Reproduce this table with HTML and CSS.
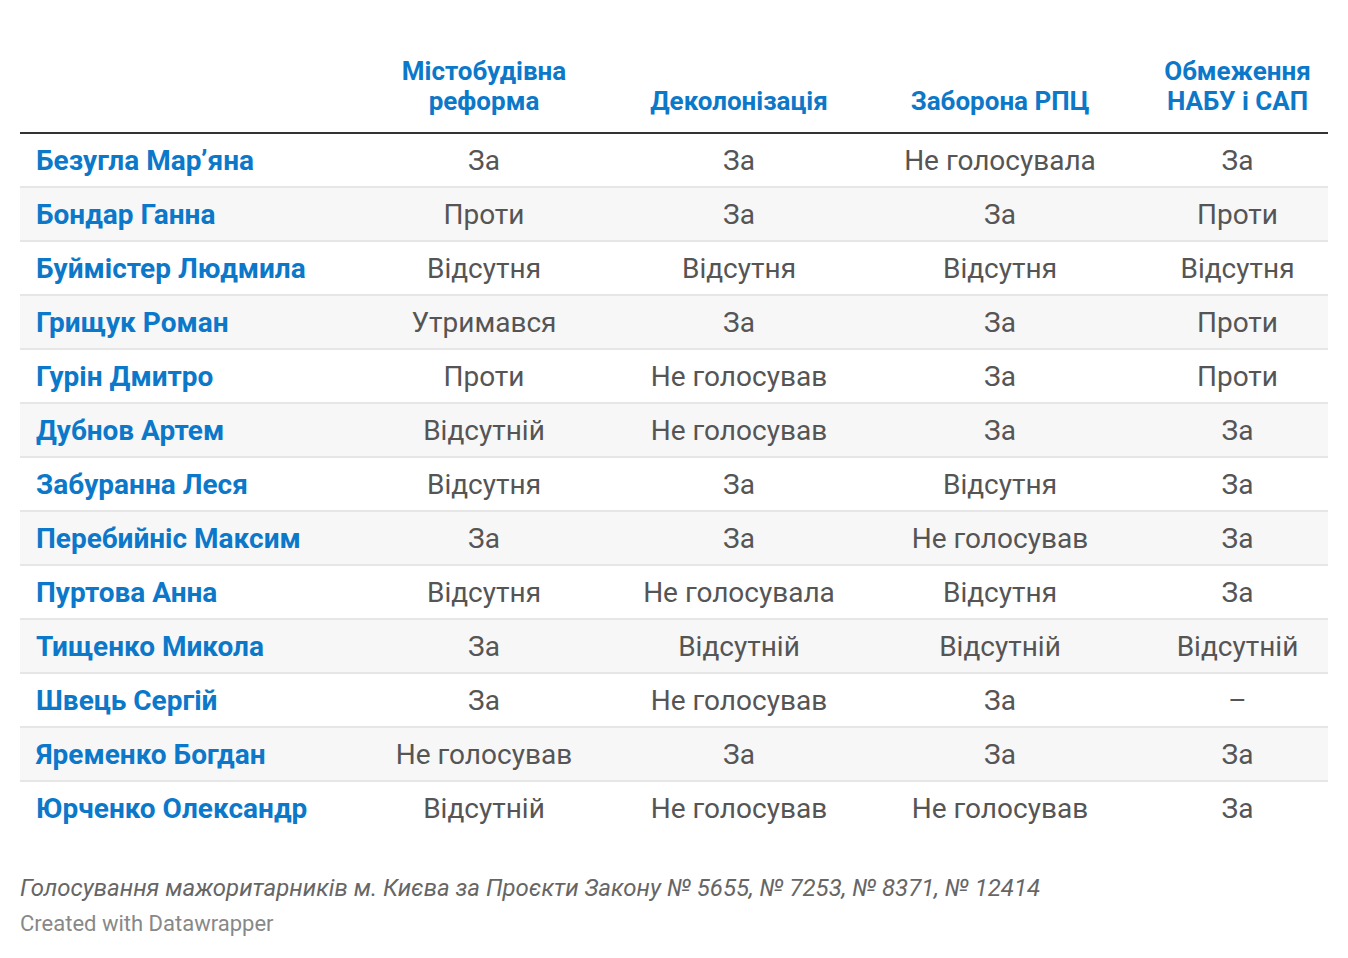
FILE: index.html
```html
<!DOCTYPE html>
<html lang="uk">
<head>
<meta charset="utf-8">
<title>Голосування</title>
<link rel="stylesheet" href="styles.css">
</head>
<body>
<div class="chart">
  <table class="votes">
    <colgroup>
      <col class="c-name"><col class="c1"><col class="c2"><col class="c3"><col class="c4">
    </colgroup>
    <thead>
      <tr>
        <th class="name"></th>
        <th>Містобудівна<br>реформа</th>
        <th>Деколонізація</th>
        <th>Заборона РПЦ</th>
        <th>Обмеження<br>НАБУ і САП</th>
      </tr>
    </thead>
    <tbody>
      <tr><td class="name">Безугла Мар’яна</td><td>За</td><td>За</td><td>Не голосувала</td><td>За</td></tr>
      <tr><td class="name">Бондар Ганна</td><td>Проти</td><td>За</td><td>За</td><td>Проти</td></tr>
      <tr><td class="name">Буймістер Людмила</td><td>Відсутня</td><td>Відсутня</td><td>Відсутня</td><td>Відсутня</td></tr>
      <tr><td class="name">Грищук Роман</td><td>Утримався</td><td>За</td><td>За</td><td>Проти</td></tr>
      <tr><td class="name">Гурін Дмитро</td><td>Проти</td><td>Не голосував</td><td>За</td><td>Проти</td></tr>
      <tr><td class="name">Дубнов Артем</td><td>Відсутній</td><td>Не голосував</td><td>За</td><td>За</td></tr>
      <tr><td class="name">Забуранна Леся</td><td>Відсутня</td><td>За</td><td>Відсутня</td><td>За</td></tr>
      <tr><td class="name">Перебийніс Максим</td><td>За</td><td>За</td><td>Не голосував</td><td>За</td></tr>
      <tr><td class="name">Пуртова Анна</td><td>Відсутня</td><td>Не голосувала</td><td>Відсутня</td><td>За</td></tr>
      <tr><td class="name">Тищенко Микола</td><td>За</td><td>Відсутній</td><td>Відсутній</td><td>Відсутній</td></tr>
      <tr><td class="name">Швець Сергій</td><td>За</td><td>Не голосував</td><td>За</td><td>–</td></tr>
      <tr><td class="name">Яременко Богдан</td><td>Не голосував</td><td>За</td><td>За</td><td>За</td></tr>
      <tr><td class="name">Юрченко Олександр</td><td>Відсутній</td><td>Не голосував</td><td>Не голосував</td><td>За</td></tr>
    </tbody>
  </table>
  <div class="notes">Голосування мажоритарників м. Києва за Проєкти Закону № 5655, № 7253, № 8371, № 12414</div>
  <div class="credit">Created with Datawrapper</div>
</div>
</body>
</html>
```
FILE: styles.css
```css
html, body {
  margin: 0;
  padding: 0;
  background: #ffffff;
}
body {
  font-family: Roboto, "Noto Sans", sans-serif;
}
.chart {
  padding: 56px 20px 0 20px;
}
.votes {
  width: 1308px;
  border-collapse: collapse;
  table-layout: fixed;
}
.c-name { width: 323px; }
.c1 { width: 282px; }
.c2 { width: 228px; }
.c3 { width: 294px; }
.c4 { width: 181px; }
.votes th {
  color: #0c78c9;
  font-weight: 700;
  font-size: 26px;
  line-height: 30px;
  text-align: center;
  vertical-align: bottom;
  padding: 0 0 16px 0;
  border-bottom: 2px solid #333333;
}
.votes td {
  height: 52px;
  padding: 0;
  font-size: 28px;
  color: #555555;
  text-align: center;
  vertical-align: middle;
  border-bottom: 2px solid #e6e6e6;
}
.votes td.name {
  text-align: left;
  padding-left: 16px;
  color: #0c78c9;
  font-weight: 700;
}
.votes tbody tr:nth-child(even) td {
  background: #f7f7f7;
}
.votes tbody tr:last-child td {
  border-bottom: none;
}
.notes {
  margin-top: 39px;
  font-style: italic;
  font-size: 24px;
  color: #666666;
  line-height: 30px;
}
.credit {
  margin-top: 9px;
  font-size: 22px;
  color: #888888;
  line-height: 24px;
}
```
